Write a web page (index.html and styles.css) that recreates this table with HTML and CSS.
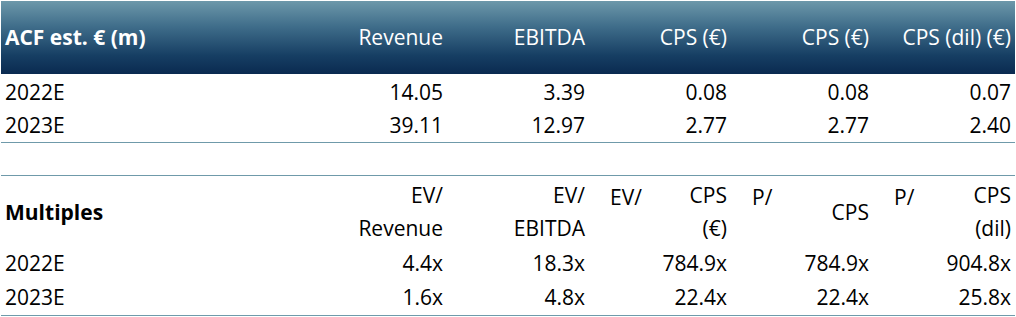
FILE: index.html
```html
<!DOCTYPE html>
<html lang="en">
<head>
  <meta charset="UTF-8" />
  <title>ACF estimates</title>
  <link rel="stylesheet" href="styles.css">
</head>
<body>
  <div class="sheet">
    <div class="block">
      <div class="row head">
        <div class="c label">ACF est. € (m)</div>
        <div class="c">Revenue</div>
        <div class="c">EBITDA</div>
        <div class="c">CPS (€)</div>
        <div class="c">CPS (€)</div>
        <div class="c">CPS (dil) (€)</div>
      </div>
      <div class="body">
        <div class="row">
          <div class="c label">2022E</div>
          <div class="c">14.05</div>
          <div class="c">3.39</div>
          <div class="c">0.08</div>
          <div class="c">0.08</div>
          <div class="c">0.07</div>
        </div>
        <div class="row">
          <div class="c label">2023E</div>
          <div class="c">39.11</div>
          <div class="c">12.97</div>
          <div class="c">2.77</div>
          <div class="c">2.77</div>
          <div class="c">2.40</div>
        </div>
      </div>
    </div>

    <div class="block multiples">
      <div class="row mhead">
        <div class="c label strong">Multiples</div>
        <div class="c split"><span class="r">EV/<br>Revenue</span></div>
        <div class="c split"><span class="r">EV/<br>EBITDA</span></div>
        <div class="c split"><span class="l">EV/</span><span class="r">CPS<br>(€)</span></div>
        <div class="c split"><span class="l">P/</span><span class="r mid">CPS</span></div>
        <div class="c split"><span class="l">P/</span><span class="r">CPS<br>(dil)</span></div>
      </div>
      <div class="row">
        <div class="c label">2022E</div>
        <div class="c">4.4x</div>
        <div class="c">18.3x</div>
        <div class="c">784.9x</div>
        <div class="c">784.9x</div>
        <div class="c">904.8x</div>
      </div>
      <div class="row">
        <div class="c label">2023E</div>
        <div class="c">1.6x</div>
        <div class="c">4.8x</div>
        <div class="c">22.4x</div>
        <div class="c">22.4x</div>
        <div class="c">25.8x</div>
      </div>
    </div>
  </div>
</body>
</html>
```

FILE: styles.css
```css
* {
  margin: 0;
  padding: 0;
  box-sizing: border-box;
}
body {
  background: #ffffff;
  color: #000;
  font-family: 'Open Sans', 'Noto Sans', sans-serif;
  font-size: 21px;
  padding: 1px 0 0 1px;
}
.sheet {
  width: 1014px;
}
.row {
  display: grid;
  grid-template-columns: 304px repeat(5, 142px);
  height: 33px;
  align-items: center;
}
.c {
  text-align: right;
  padding-right: 4px;
  white-space: nowrap;
  line-height: 33px;
}
.c.label {
  text-align: left;
  padding-left: 4px;
}
.strong {
  font-weight: 700;
}

/* estimates block */
.head {
  height: 73px;
  color: #ffffff;
  background: linear-gradient(180deg, #6d98aa 0%, #3f6d8a 35%, #163e63 75%, #0a2a50 100%);
}
.head .label {
  font-weight: 700;
}
.body {
  padding-top: 2px;
  border-bottom: 1px solid #6f9aaa;
}

/* multiples block */
.multiples {
  margin-top: 32px;
  border-top: 1px solid #6f9aaa;
  border-bottom: 1px solid #6f9aaa;
}
.mhead {
  height: auto;
  padding: 3px 0 2px;
  align-items: stretch;
}
.mhead .label {
  align-self: center;
}
.split {
  display: flex;
  justify-content: space-between;
  padding-left: 21px;
}
.split .l {
  align-self: flex-start;
  padding-top: 2px;
}
.split .r {
  margin-left: auto;
  text-align: right;
}
.split .mid {
  align-self: center;
}
.multiples .row:last-child {
  height: 35px;
}
```
